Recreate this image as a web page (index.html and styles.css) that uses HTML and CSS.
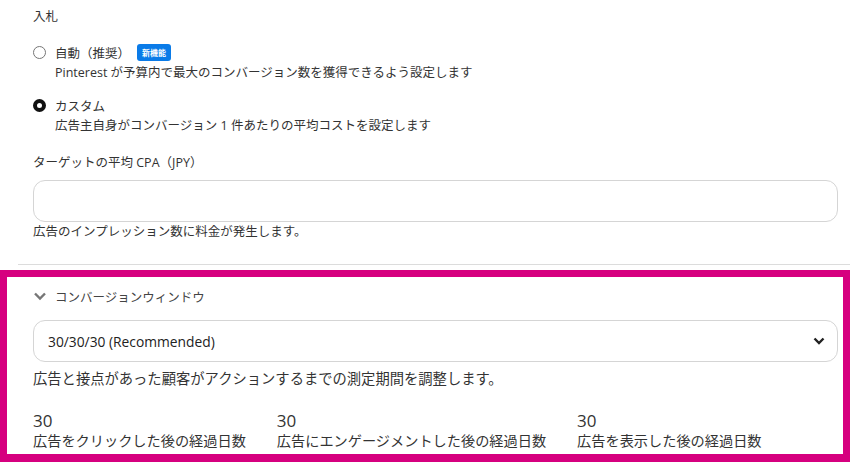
FILE: index.html
```html
<!DOCTYPE html>
<html lang="ja">
<head>
<meta charset="utf-8">
<link rel="stylesheet" href="styles.css">
</head>
<body>
<div class="top">
  <div class="title">入札</div>
  <div class="option">
    <div class="row"><span class="radio"></span><span class="label">自動（推奨）</span><span class="badge">新機能</span></div>
    <div class="desc">Pinterest が予算内で最大のコンバージョン数を獲得できるよう設定します</div>
  </div>
  <div class="option second">
    <div class="row"><span class="radio checked"></span><span class="label">カスタム</span></div>
    <div class="desc">広告主自身がコンバージョン 1 件あたりの平均コストを設定します</div>
  </div>
  <div class="field-label">ターゲットの平均 CPA（JPY）</div>
  <div class="input"></div>
  <div class="help">広告のインプレッション数に料金が発生します。</div>
</div>
<div class="divider"></div>
<div class="box">
  <div class="acc-head">
    <svg class="chev" width="14" height="10" viewBox="0 0 14 10"><polyline points="2,2.5 7,7.5 12,2.5" fill="none" stroke="#767676" stroke-width="2.4"/></svg>
    <span>コンバージョンウィンドウ</span>
  </div>
  <div class="select">
    <span>30/30/30 (Recommended)</span>
    <svg width="12" height="8" viewBox="0 0 12 8"><polyline points="1.5,1.5 6,6 10.5,1.5" fill="none" stroke="#222" stroke-width="2.4"/></svg>
  </div>
  <div class="help2">広告と接点があった顧客がアクションするまでの測定期間を調整します。</div>
  <div class="stats">
    <div class="stat"><div class="num">30</div><div class="cap">広告をクリックした後の経過日数</div></div>
    <div class="stat"><div class="num">30</div><div class="cap">広告にエンゲージメントした後の経過日数</div></div>
    <div class="stat"><div class="num">30</div><div class="cap">広告を表示した後の経過日数</div></div>
  </div>
</div>
</body>
</html>
```
FILE: styles.css
```css
html, body {
  margin: 0;
  padding: 0;
  background: #fff;
}
body {
  width: 850px;
  height: 462px;
  overflow: hidden;
  font-family: "Open Sans", "Noto Sans CJK JP", sans-serif;
  font-size: 12.5px;
  color: #333;
}
.top {
  padding: 7px 12px 0 33px;
}
.title {
  line-height: 20px;
}
.option {
  margin-top: 15px;
}
.option.second {
  margin-top: 12px;
}
.row {
  display: flex;
  align-items: center;
  height: 20px;
}
.radio {
  width: 13px;
  height: 13px;
  box-sizing: border-box;
  border: 1px solid #767676;
  border-radius: 50%;
  margin-right: 9px;
  flex: none;
}
.radio.checked {
  border: 4px solid #111;
  background: #fff;
}
.badge {
  margin-left: 7px;
  background: #0a7be8;
  color: #fff;
  font-size: 8px;
  font-weight: bold;
  line-height: 17px;
  height: 17px;
  padding: 0 5px;
  border-radius: 3px;
}
.desc {
  padding-left: 22px;
  line-height: 20px;
  margin-top: 1px;
}
.field-label {
  margin-top: 17px;
  line-height: 20px;
}
.input {
  margin-top: 7px;
  height: 42px;
  box-sizing: border-box;
  border: 1px solid #d5d5d5;
  border-radius: 12px;
}
.help {
  line-height: 20px;
}
.divider {
  margin: 22px 0 0 18px;
  height: 1px;
  background: #dcdcdc;
}
.box {
  margin-top: 5px;
  border: 7px solid #d6007f;
  border-bottom-width: 8px;
  padding: 9px 5px 0 26px;
  height: 192px;
  box-sizing: border-box;
}
.acc-head {
  display: flex;
  align-items: center;
  height: 20px;
  color: #444;
}
.chev {
  margin-right: 8px;
}
.select {
  margin-top: 14px;
  height: 42px;
  box-sizing: border-box;
  border: 1px solid #d5d5d5;
  border-radius: 12px;
  display: flex;
  align-items: center;
  justify-content: space-between;
  padding: 0 12px 0 14px;
  color: #222;
  font-size: 13.8px;
}
.help2 {
  margin-top: 7px;
  line-height: 20px;
  font-size: 14.3px;
}
.stats {
  display: flex;
  gap: 31px;
  margin-top: 22px;
  font-size: 14.2px;
}
.num {
  font-size: 17px;
  line-height: 20px;
}
.cap {
  line-height: 20px;
}
```
